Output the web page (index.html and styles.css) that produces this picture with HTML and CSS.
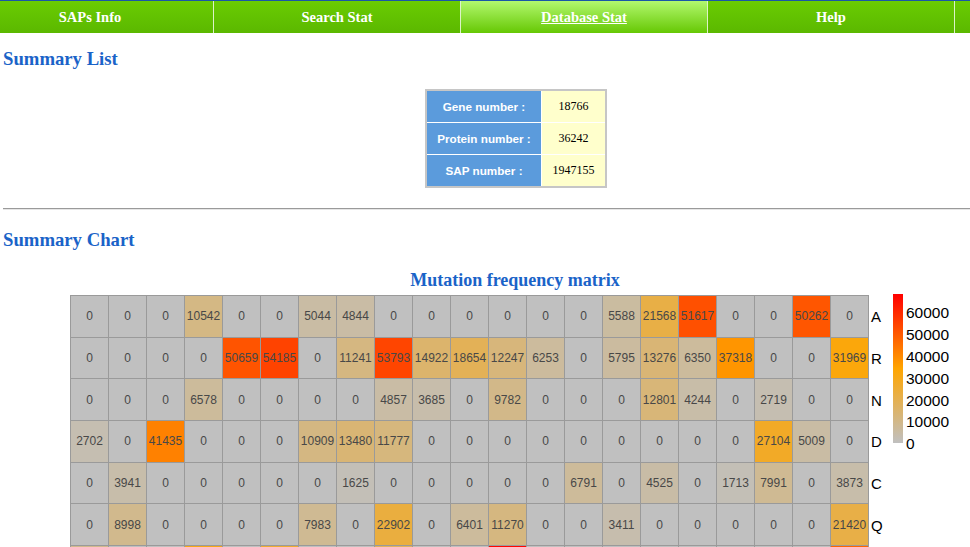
FILE: index.html
```html
<!DOCTYPE html>
<html lang="en">
<head>
<meta charset="utf-8">
<title>Database Stat</title>
<link rel="stylesheet" href="styles.css">
</head>
<body>
<nav class="topnav">
  <a class="tab">SAPs Info</a>
  <a class="tab">Search Stat</a>
  <a class="tab active">Database Stat</a>
  <a class="tab">Help</a>
  <a class="tab"></a>
</nav>
<main class="page">
  <h3 class="section-title first">Summary List</h3>
  <table class="summary">
    <tr><th>Gene number :</th><td>18766</td></tr>
    <tr><th>Protein number :</th><td>36242</td></tr>
    <tr><th>SAP number :</th><td>1947155</td></tr>
  </table>
  <hr class="divider">
  <h3 class="section-title chart-heading">Summary Chart</h3>
  <div class="chart-title">Mutation frequency matrix</div>
  <div class="chart">
    <div class="matrix" id="matrix"></div>
    <div class="row-labels" id="rowLabels"></div>
    <div class="legend">
      <div class="colorbar"></div>
      <div class="ticks">
        <span>60000</span>
        <span>50000</span>
        <span>40000</span>
        <span>30000</span>
        <span>20000</span>
        <span>10000</span>
        <span>0</span>
      </div>
    </div>
  </div>
</main>
<script src="script.js"></script>
</body>
</html>
```

FILE: styles.css
```css
html, body {
  margin: 0;
  padding: 0;
  overflow: hidden;
  background: #ffffff;
}
body {
  font-family: "Liberation Serif", "Times New Roman", serif;
}
.topnav {
  display: flex;
  height: 32px;
  border-top: 1px solid #1a56a8;
  margin-left: -33px;
  width: calc(100% + 33px);
  overflow: hidden;
  background: linear-gradient(#6acc02, #5bb800);
}
.tab {
  flex: 0 0 246px;
  border-right: 1px solid #dcf2c8;
  color: #ffffff;
  font-weight: bold;
  font-size: 14.5px;
  line-height: 32px;
  text-align: center;
  text-decoration: none;
}
.tab.active {
  background: linear-gradient(#b2f86e, #66c804);
  text-decoration: underline;
}
.page {
  padding-left: 3px;
}
.section-title {
  margin: 14px 0 0;
  font-size: 18.72px;
  line-height: 21px;
  color: #1a63c8;
  font-weight: bold;
}
.section-title.first {
  margin-top: 15px;
}
.summary {
  margin: 20px 0 0 422px;
  border: 2px solid #c6c6c6;
  border-collapse: separate;
  border-spacing: 0;
}
.summary th {
  width: 114px;
  height: 31px;
  padding: 0;
  background: #5b9bdc;
  color: #ffffff;
  font: bold 11.7px "Liberation Sans", Arial, sans-serif;
  text-align: center;
  border-right: 1px solid #ffffff;
}
.summary td {
  width: 63px;
  padding: 0;
  background: #ffffcc;
  color: #000000;
  font-size: 12px;
  text-align: center;
}
.summary tr + tr th,
.summary tr + tr td {
  border-top: 1px solid #ffffff;
}
.divider {
  margin: 20px 0 0;
  height: 0;
  border: 0;
  border-top: 1px solid #9a9a9a;
  border-bottom: 1px solid #e6e6e6;
}
.chart-heading {
  margin-top: 19px;
}
.chart-title {
  margin: 20px 0 0 57px;
  line-height: 20px;
  font-size: 18px;
  font-weight: bold;
  color: #1a63c8;
  text-align: center;
}
.chart {
  display: flex;
  align-items: flex-start;
  margin: 5px 0 0 67px;
}
.matrix {
  display: grid;
  grid-template-columns: repeat(21, 37px);
  grid-auto-rows: 40.67px;
  gap: 1px;
  background: #9a9a9a;
  border: 1px solid #9a9a9a;
}
.cell {
  display: flex;
  align-items: center;
  justify-content: center;
  font: 12px "Liberation Sans", Arial, sans-serif;
  color: #484848;
  white-space: nowrap;
  overflow: hidden;
}
.row-labels {
  margin-left: 2px;
  width: 22px;
  padding-top: 1px;
}
.row-label {
  height: 41.67px;
  display: flex;
  align-items: center;
  font: 15px "Liberation Sans", Arial, sans-serif;
  color: #000000;
}
.legend {
  display: flex;
  align-items: flex-start;
}
.colorbar {
  width: 10px;
  height: 149px;
  margin-top: -1px;
  background: linear-gradient(to top, #c0c0c0, #ffa500 50%, #ff0000);
}
.ticks {
  display: flex;
  flex-direction: column;
  margin: 7.4px 0 0 3px;
  font: 15.5px "Liberation Sans", Arial, sans-serif;
  line-height: 21.78px;
  color: #000000;
}
```

FILE: script.js
```js
(function () {
  var labels = ["A","R","N","D","C","Q","E"];
  var data = [
    [0,0,0,10542,0,0,5044,4844,0,0,0,0,0,0,5588,21568,51617,0,0,50262,0],
    [0,0,0,0,50659,54185,0,11241,53793,14922,18654,12247,6253,0,5795,13276,6350,37318,0,0,31969],
    [0,0,0,6578,0,0,0,0,4857,3685,0,9782,0,0,0,12801,4244,0,2719,0,0],
    [2702,0,41435,0,0,0,10909,13480,11777,0,0,0,0,0,0,0,0,0,27104,5009,0],
    [0,3941,0,0,0,0,0,1625,0,0,0,0,0,6791,0,4525,0,1713,7991,0,3873],
    [0,8998,0,0,0,0,7983,0,22902,0,6401,11270,0,0,3411,0,0,0,0,0,21420],
    [9120,0,0,30122,0,25410,0,0,17230,0,0,66812,0,0,0,0,0,0,0,0,47260]
  ];
  var MAX = 68000;
  function color(v) {
    var t = Math.min(v / MAX, 1), r, g, b, u;
    if (t < 0.5) {
      u = t / 0.5;
      r = 192 + 63 * u; g = 192 - 27 * u; b = 192 - 192 * u;
    } else {
      u = (t - 0.5) / 0.5;
      r = 255; g = 165 - 165 * u; b = 0;
    }
    return "rgb(" + Math.round(r) + "," + Math.round(g) + "," + Math.round(b) + ")";
  }
  var matrix = document.getElementById("matrix");
  var rowLabels = document.getElementById("rowLabels");
  data.forEach(function (row, i) {
    row.forEach(function (v) {
      var c = document.createElement("div");
      c.className = "cell";
      c.textContent = v;
      c.style.background = color(v);
      matrix.appendChild(c);
    });
    var l = document.createElement("div");
    l.className = "row-label";
    l.textContent = labels[i];
    rowLabels.appendChild(l);
  });
})();
```
